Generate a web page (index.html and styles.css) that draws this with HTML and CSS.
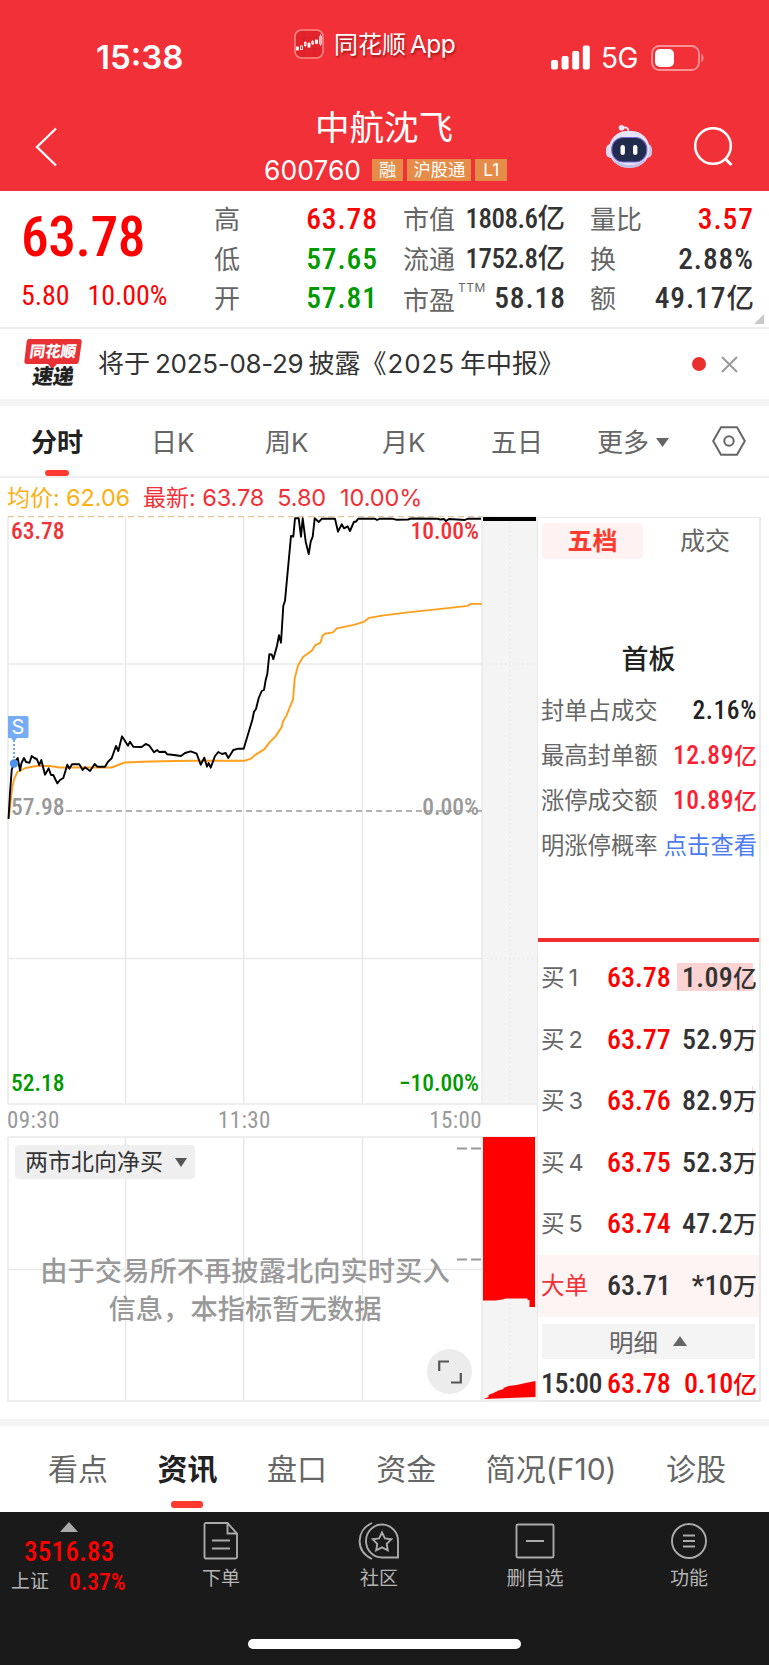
FILE: index.html
```
<!DOCTYPE html>
<html lang="zh-CN">
<head>
  <meta charset="UTF-8">
  <title>中航沈飞 600760</title>
  <link rel="stylesheet" href="styles.css">
</head>
<body>
  <header class="header">
    <div class="status-bar">
      <div class="time">15:38</div>
      <div class="brand">
        <svg width="30" height="30" viewBox="0 0 30 30">
          <rect x="1" y="1" width="28" height="28" rx="6.5" fill="#e3242b" stroke="#f98a8c" stroke-width="1.5"/>
          <path d="M2 9h26M2 20h26M10 2v26M20 2v26" stroke="#d61f27" stroke-width=".7"/>
          <g fill="#fff" stroke="#fff" stroke-width=".8">
            <rect x="2.5" y="18" width="2" height="3"/>
            <rect x="6.5" y="17" width="2" height="3.5" fill="none"/>
            <rect x="10.5" y="13.5" width="1.6" height="3" fill="none"/>
            <rect x="14" y="14.5" width="2" height="3.5"/>
            <rect x="17.8" y="12.5" width="1.6" height="2.5" fill="none"/>
            <rect x="21.5" y="11" width="2" height="3.5"/>
            <rect x="25.5" y="7" width="2" height="8.5" rx="1" fill="none"/>
            <path d="M11.3 12v6M15 13v6M18.6 11v5M26.5 5v12" fill="none" stroke-width=".6"/>
          </g>
        </svg>
        <span>同花顺<i>App</i></span>
      </div>
      <div class="signals">
        <svg width="39" height="25" viewBox="0 0 39 25" fill="#fff">
          <rect x="0" y="15" width="7" height="9.5" rx="2"/>
          <rect x="10.6" y="11" width="7" height="13.5" rx="2"/>
          <rect x="21.2" y="6" width="7" height="18.5" rx="2"/>
          <rect x="31.8" y="0.5" width="7" height="24" rx="2"/>
        </svg>
        <span class="net">5G</span>
        <svg width="54" height="26" viewBox="0 0 54 26">
          <rect x="1" y="1" width="47" height="24" rx="7.5" fill="none" stroke="#f99496" stroke-width="1.8"/>
          <path d="M50.500 9c2.600.8 2.600 7.200 0 8z" fill="#f99496"/>
          <rect x="4" y="4" width="19" height="18" rx="5" fill="#fff"/>
        </svg>
      </div>
    </div>
    <div class="nav">
      <svg class="back" width="24" height="40" viewBox="0 0 24 40"><path d="M21 1.500L2 20l19 18.500" fill="none" stroke="#fff" stroke-width="2.3"/></svg>
      <div class="stock">
        <h1>中航沈飞</h1>
        <div class="code">600760<b>融</b><b>沪股通</b><b>L1</b></div>
      </div>
      <svg class="robot" width="48" height="44" viewBox="0 0 48 44">
        <path d="M17 4q7-2 6.500 4" fill="none" stroke="#e6e3f7" stroke-width="1.8"/>
        <circle cx="16.5" cy="3.7" r="2.8" fill="#eceafc"/>
        <rect x="1" y="20" width="10" height="14" rx="5" fill="#dcdaf3"/>
        <rect x="37" y="20" width="10" height="14" rx="5" fill="#c8c4ea"/>
        <rect x="4" y="7" width="40.5" height="36.5" rx="18" fill="#e5e3f8"/>
        <path d="M7 33c6 10 28 11 34 0-3 15-31 14-34 0z" fill="#c2bee6"/>
        <rect x="6.8" y="13.5" width="35" height="24.5" rx="11.5" fill="#212b4b" stroke="#7466dd" stroke-width="1.2"/>
        <rect x="15.5" y="21" width="4.4" height="10" rx="2.2" fill="#fff"/>
        <rect x="28" y="21" width="4.4" height="10" rx="2.2" fill="#fff"/>
      </svg>
      <svg class="search" width="40" height="40" viewBox="0 0 40 40"><circle cx="19" cy="19" r="17.8" fill="none" stroke="#fff" stroke-width="2.5"/><path d="M31 31.500l6.500 6.500" stroke="#fff" stroke-width="3"/></svg>
    </div>
  </header>

  <section class="quote">
    <div class="last">
      <div class="price">63.78</div>
      <div class="change"><span>5.80</span><span>10.00%</span></div>
    </div>
    <dl class="col col-a">
      <dt>高</dt><dd class="red">63.78</dd>
      <dt>低</dt><dd class="green">57.65</dd>
      <dt>开</dt><dd class="green">57.81</dd>
    </dl>
    <dl class="col col-b">
      <dt>市值</dt><dd class="small">1808.6<em>亿</em></dd>
      <dt>流通</dt><dd class="small">1752.8<em>亿</em></dd>
      <dt class="pe">市盈<sup>TTM</sup></dt><dd>58.18</dd>
    </dl>
    <dl class="col col-c">
      <dt>量比</dt><dd class="red">3.57</dd>
      <dt>换</dt><dd>2.88%</dd>
      <dt>额</dt><dd>49.17<em>亿</em></dd>
    </dl>
    <svg class="corner" width="10" height="10"><path d="M10 0v10H0z" fill="#c8c8c8"/></svg>
  </section>

  <section class="news">
    <div class="news-logo">
      <svg width="58" height="34" viewBox="0 0 58 34"><path d="M5 0h50q3 0 2.700 3L55 22q-.5 3-3 3H33l-5 5-4-5H3q-3 0-2.600-3L2.600 3q.4-3 2.400-3z" fill="#e83035"/></svg>
      <b>同花顺</b>
      <strong>速递</strong>
    </div>
    <p>将于<i>2025-08-29</i>披露<span>《</span><i class="year">2025</i>年中报<span>》</span></p>
    <span class="dot"></span>
    <svg class="close" width="17" height="17" viewBox="0 0 17 17"><path d="M1 1l15 15M16 1L1 16" stroke="#999" stroke-width="2"/></svg>
  </section>

  <nav class="periods">
    <span class="on">分时</span><span>日K</span><span>周K</span><span>月K</span><span>五日</span><span>更多<svg width="13" height="9"><path d="M0 0h13L6.500 9z" fill="#666"/></svg></span>
    <svg width="34" height="30" viewBox="0 0 34 30"><path d="M9 1.200h16L32.800 15 25 28.800H9L1.200 15z" fill="none" stroke="#666" stroke-width="2"/><circle cx="17" cy="15" r="4.7" fill="none" stroke="#666" stroke-width="2"/></svg>
  </nav>

  <main class="board">
    <div class="summary"><span class="avg">均价: <i>62.06</i></span><span>最新: <i>63.78</i></span><span class="n3"><i>5.80</i></span><span><i>10.00%</i></span></div>
    <div class="board-row">
      <div class="charts">
        <!-- intraday price -->
        <svg class="intraday" width="530" height="589" viewBox="7 516 530 589">
          <rect x="482" y="517" width="55" height="587" fill="#f4f4f4"/>
          <g fill="none" stroke="#e9e9e9" stroke-width="1.5">
            <path d="M8 517v587M125.500 517v587M243.700 517v587M362.500 517v587M482 517v587"/>
            <path d="M8 664h474M8 958.500h474M8 1104h529M482 517h55"/>
            <path d="M510 517v587M482 664h55M482 958.500h55" stroke-dasharray="1.500 3"/>
          </g>
          <path d="M8 516.700h474" stroke="#e5c69a" stroke-width="1.3" stroke-dasharray="6 4"/>
          <path d="M66 811h416" stroke="#999" stroke-width="1.5" stroke-dasharray="6 4"/>
          <path d="M9 817l1.500-14 2-17 2-8 3-6 8-4 11-2h13l10 1.500h52l8-3 5-2 25-1 40-.7h55l7-2.400 3-3 10-6.300 5-6.700 6-6 6-9 1.500-6 3.500-6 6.500-16 1.700-21 3.300-13 5-8.500 9-6.500 3-5 5.500-2.700 2-7 2.300-2 8-1.300 4-4 17-3.500 10-3 5-4 15-2.500 24-3 33-3.500 27-3 3-2h11" fill="none" stroke="#ff9f1c" stroke-width="1.9" stroke-linejoin="round"/>
          <polyline fill="none" stroke="#000" stroke-width="1.9" stroke-linejoin="round" points="8.500,819 10,793 11.700,770 14,763 17.700,758 20,770.500 21.500,763 24,758 26,762 29.500,762.700 31.700,756 34.300,758 36.700,759 39.300,765 41.300,760 45,774.700 48.700,768.300 51,775 53.300,775 57.300,783.300 60,780 63.300,778 67.300,764.700 69.300,768.700 72,764.300 79.300,764.300 82.700,770 85,767.300 90,771 94.700,764 97.300,766.700 105,766.700 108,761.700 111.700,758.300 116,746 118.300,751 122,736.300 128,745.700 130,741.700 133.300,746.700 141.700,747 145.700,744 149,745.300 154,752.300 157.300,750 159,752 165,751.700 167.300,754.300 174,755 181,756 185,753 190.700,751.300 196.700,753.700 200.700,764.700 204.300,757.700 207,766.700 208.700,763 210.700,767.700 215,756 218.300,752 222,754 225.700,753 228.300,758 233.300,750 238.300,748.700 243.700,748.700 249.300,730 252.300,720 254,711.700 256,709 258.700,698 261.700,691 264,690 265.700,680 267.300,674 269.300,654.300 271.700,654.500 273.300,659.300 277,645.700 279,635.300 281,642.700 283.300,606 285,600.700 291,536 293.300,536.700 295,518.300 298.700,518.300 301,536.700 302.700,518.300 305.700,541.700 308.700,554 310.700,541.700 312.700,536.700 314.700,518.300 318.700,522 322,518.700 335,518.700 338,531.700 341.700,524.300 344,528.300 347.700,526.300 350,531 354,521.700 356,521.700 358.300,518.700 375,518.700 377,520 380,518.700 392,518.700 396,519.700 408,519.500 411,518.500 437,518.700 440,519.500 444,519 446,521 449,519 465,520 468,518.700 481,518.700"/>
          <path d="M483 519h53" stroke="#000" stroke-width="4"/>
          <path d="M14 740v22" stroke="#5b9df0" stroke-width="1.8" stroke-dasharray="2 2"/>
          <path d="M8 716h19q1.500 0 1.500 1.500v19q0 1.500-1.500 1.500H17l-3 3.500-3-3.500H8z" fill="#76acf5"/>
          <circle cx="14" cy="763.5" r="4.2" fill="#4e91e8"/>
          <text class="flag" x="18" y="734" text-anchor="middle">S</text>
          <g class="scale">
            <text x="11" y="539" fill="#f23037">63.78</text>
            <text x="479" y="539" fill="#f23037" text-anchor="end">10.00%</text>
            <text x="11" y="815" fill="#999">57.98</text>
            <text x="479" y="815" fill="#999" text-anchor="end">0.00%</text>
            <text x="11" y="1091" fill="#090">52.18</text>
            <text x="479" y="1091" fill="#090" text-anchor="end">−10.00%</text>
          </g>
        </svg>
        <div class="times"><span>09:30</span><span>11:30</span><span>15:00</span></div>
        <div class="flow">
          <svg width="530" height="266" viewBox="7 1136 530 266">
            <rect x="482" y="1137" width="55" height="264" fill="#f4f4f4"/>
            <path d="M8 1137v264h529M125.500 1137v264M243.700 1137v264M362.500 1137v264M482 1137v264M8 1137h529M8 1269.500h474" fill="none" stroke="#e9e9e9" stroke-width="1.5"/>
            <path d="M510 1137v264" stroke="#e9e9e9" stroke-width="1.5" stroke-dasharray="1.500 3"/>
            <path d="M483 1137h52v170h-5.500v-7h-2v-1.500h-22l-3 1-7 1h-12.500z" fill="#f00"/>
            <path d="M483.500 1399l5-2v-2l5-2 5-2.500 5-1.500v-1l5-2 8-1 9-2 10-2v16z" fill="#f00"/>
            <path d="M457 1148.500h10M471 1148.500h10M457 1259.500h10M471 1259.500h10" stroke="#999" stroke-width="1.8"/>
          </svg>
          <div class="picker"><span>两市北向净买</span><svg width="12" height="9"><path d="M0 0h12L6 9z" fill="#555"/></svg></div>
          <p class="notice">由于交易所不再披露北向实时买入<br>信息，本指标暂无数据</p>
          <div class="expand"><svg width="24" height="24" viewBox="0 0 24 24"><path d="M1.200 11V1.500H11M22.800 13v9.500H13" fill="none" stroke="#555" stroke-width="2.2"/></svg></div>
        </div>
      </div>

      <aside class="depth">
        <div class="depth-tabs"><span class="on">五档</span><span>成交</span></div>
        <h2>首板</h2>
        <ul class="facts">
          <li><span>封单占成交</span><b>2.16%</b></li>
          <li><span>最高封单额</span><b class="hot">12.89<em>亿</em></b></li>
          <li><span>涨停成交额</span><b class="hot">10.89<em>亿</em></b></li>
          <li><span>明涨停概率</span><a>点击查看</a></li>
        </ul>
        <ul class="orders">
          <li><span>买<i>1</i></span><b>63.78</b><u class="bar full">1.09<em>亿</em></u></li>
          <li><span>买<i>2</i></span><b>63.77</b><u class="bar">52.9<em>万</em></u></li>
          <li><span>买<i>3</i></span><b>63.76</b><u class="bar">82.9<em>万</em></u></li>
          <li><span>买<i>4</i></span><b>63.75</b><u class="bar">52.3<em>万</em></u></li>
          <li><span>买<i>5</i></span><b>63.74</b><u>47.2<em>万</em></u></li>
          <li class="big"><span>大单</span><b>63.71</b><u>*10<em>万</em></u></li>
        </ul>
        <div class="detail">明细<svg width="14" height="10"><path d="M7 0l7 10H0z" fill="#666"/></svg></div>
        <div class="tick"><span>15:00</span><b>63.78</b><u>0.10<em>亿</em></u></div>
      </aside>
    </div>
  </main>

  <nav class="sections">
    <span>看点</span><span class="on">资讯</span><span>盘口</span><span>资金</span><span>简况(F10)</span><span>诊股</span>
  </nav>

  <footer class="toolbar">
    <div class="index">
      <svg width="18" height="10"><path d="M9 0l9 10H0z" fill="#aaa"/></svg>
      <b>3516.83</b>
      <div><span>上证</span><em>0.37%</em></div>
    </div>
    <div class="tool t1">
      <svg width="36" height="38" viewBox="0 0 36 38"><path d="M3 1h21.500L34 11.500V35q0 1.500-1.500 1.500h-29Q1.500 36.500 1.500 35V2.500Q1.500 1 3 1zM24.500 1v10.500H34M9 18.500h18M9 26.500h18"/></svg>
      下单
    </div>
    <div class="tool t2">
      <svg width="42" height="38" viewBox="0 0 42 38"><path d="M14 1C-2 8-3 29 14 37M40 35.500V19.500A16 16.500 0 1 0 24 35.500zM24 10.500l2.900 5.900 6.400.9-4.600 4.600 1.100 6.400-5.800-3-5.800 3 1.100-6.400-4.600-4.600 6.400-.9z"/></svg>
      社区
    </div>
    <div class="tool t3">
      <svg width="40" height="38" viewBox="0 0 40 38"><path d="M3 2.500h34q1.500 0 1.500 1.500v30q0 1.500-1.500 1.500H3Q1.500 35.500 1.500 34V4Q1.500 2.500 3 2.500zM11 19h18"/></svg>
      删自选
    </div>
    <div class="tool t4">
      <svg width="38" height="38" viewBox="0 0 38 38"><circle cx="19" cy="19" r="17"/><path d="M13 13.500h12M13 19h12M13 24.500h12"/></svg>
      功能
    </div>
    <div class="home"></div>
  </footer>
</body>
</html>
```
FILE: styles.css
```
* { box-sizing: border-box; margin: 0; padding: 0; }
body { width: 769px; height: 1665px; background: #fff; font-family: Inter, "Noto Sans CJK SC", sans-serif; color: #333; overflow: hidden; }
i, em, u { font-style: normal; text-decoration: none; }
ul { list-style: none; }
svg { display: block; flex: none; }
.red { color: #f00 !important; }
.green { color: #090 !important; }

/* header */
.header { height: 191px; background: #f23037; color: #fff; }
.status-bar { height: 90px; display: flex; }
.time { width: 294px; padding: 36px 0 0 96px; font-size: 33px; line-height: 43px; font-weight: 600; }
.brand { width: 257px; display: flex; padding-top: 29px; }
.brand span { margin-left: 10px; font-size: 24px; line-height: 31px; white-space: nowrap; text-shadow: 1px 2px 2px rgba(80,0,0,.5); }
.brand i { margin-left: 4px; font-size: 24.5px; letter-spacing: -.6px; }
.signals { display: flex; padding-top: 45px; }
.net { width: 37px; margin: 0 13px 0 11px; font-size: 28px; line-height: 27px; letter-spacing: -.5px; }
.nav { display: flex; height: 101px; }
.back { margin: 37px 0 0 35px; }
.stock { width: 250px; margin-left: 205px; }
.stock h1 { padding-left: 51px; font-size: 34.5px; line-height: 40px; font-weight: 400; margin-top: 18px; white-space: nowrap; }
.code { display: flex; align-items: center; height: 29px; margin-top: 7px; font-size: 26.5px; }
.code b { margin-left: 4px; padding: 0 6px; height: 22px; line-height: 21px; font-size: 17.3px; font-weight: 400; background: #e58c49; white-space: nowrap; }
.code b:first-of-type { margin-left: 11px; padding: 0 7px; }
.code b:last-of-type { padding: 0 8px; }
.robot { margin: 34px 0 0 91px; }
.search { margin: 37px 0 0 41px; }

/* quote */
.quote { position: relative; height: 138px; display: flex; padding-top: 9px; border-bottom: 2px solid #ececec; }
.last { width: 214px; padding-left: 21px; font-family: "Roboto Condensed"; color: #f00; }
.price { margin-top: 8px; font-size: 55.5px; line-height: 60px; font-weight: 500; letter-spacing: -.5px; }
.change { margin-top: 12px; display: flex; gap: 18px; font-size: 28px; line-height: 32px; letter-spacing: -.1px; font-weight: 450; }
.col { display: grid; grid-template-columns: 52px 1fr; grid-auto-rows: 39.5px; line-height: 38px; white-space: nowrap; }
.col dt { padding-top: 1px; font-size: 26px; color: #666; }
.col dd { text-align: right; font-family: "Roboto Condensed", "Noto Sans CJK SC"; font-size: 29.5px; font-weight: 500; letter-spacing: .9px; margin-right: -.9px; }
.col .small { font-size: 27px; letter-spacing: -.5px; margin-right: 0; }
.col em { font-size: 27.5px; letter-spacing: 0; }
.col-a { width: 163px; }
.col-b { width: 162px; margin-left: 26px; }
.col-c { width: 163px; margin-left: 25px; }
.col .pe { padding-top: 3px; }
.pe sup { font-size: 12px; vertical-align: 18px; line-height: 0; margin-left: 3px; letter-spacing: .5px; }
.corner { position: absolute; right: 5px; bottom: 3px; }

/* news */
.news { height: 77px; display: flex; align-items: center; border-bottom: 7px solid #f4f4f4; }
.news-logo { position: relative; width: 58px; height: 48px; margin: -2px 0 0 24px; }
.news-logo svg { position: absolute; left: 0; top: 0; }
.news-logo b, .news-logo strong { position: relative; display: block; width: 58px; text-align: center; transform: skewX(-8deg); font-weight: 900; }
.news-logo b { font-size: 15.5px; line-height: 25px; color: #fff; }
.news-logo strong { font-size: 21px; line-height: 25px; color: #222; letter-spacing: -.5px; }
.news p { flex: none; width: 610px; padding-left: 16px; font-size: 26px; line-height: 40px; white-space: nowrap; }
.news i { margin: 0 5px; font-size: 26px; letter-spacing: -.3px; }
.news .year { margin-left: 1px; letter-spacing: .9px; }
.dot { width: 14px; height: 14px; border-radius: 7px; background: #e9302f; }
.close { margin-left: 15px; }

/* period tabs */
.periods { position: relative; display: flex; height: 72px; align-items: center; color: #666; font-size: 26px; border-bottom: 2px solid #eee; line-height: 40px; white-space: nowrap; }
.periods span { position: relative; top: 1.5px; }
.periods span:nth-child(1) { margin-left: 31px; width: 52px; }
.periods span:nth-child(2) { margin-left: 68px; width: 43px; }
.periods span:nth-child(3) { margin-left: 71px; width: 45px; }
.periods span:nth-child(4) { margin-left: 72px; width: 44px; }
.periods span:nth-child(5) { margin-left: 65px; width: 52px; }
.periods span:nth-child(6) { margin-left: 54px; width: 72px; display: flex; align-items: center; gap: 7px; }
.periods > svg { margin-left: 43px; }
.on { font-weight: 700; color: #222; }
.periods .on::after, .sections .on::after { content: ""; position: absolute; left: 50%; width: 24px; height: 6px; margin-left: -12px; border-radius: 3px; background: #ff3b30; }
.periods .on::after { bottom: -13.5px; }

/* board */
.board { height: 948px; padding: 0 8px 0 7px; border-bottom: 7px solid #f4f4f4; }
.summary { display: flex; height: 38px; font-size: 23px; line-height: 40px; color: #f23037; white-space: pre; }
.summary span { margin-right: 13px; }
.summary i { font-size: 23.5px; letter-spacing: -.1px; }
.summary .avg { color: #fbb016; }
.summary .n3 { margin-right: 14px; }
.board-row { display: flex; }
.charts { width: 530px; }
.scale, .times { font-family: "Roboto Condensed"; font-size: 23.5px; font-weight: 500; }
.flag { font-size: 20px; fill: #fff; }
.times { display: flex; justify-content: space-between; width: 475px; height: 31px; line-height: 31px; font-size: 23px; letter-spacing: .4px; color: #999; font-weight: 450; }
.flow { position: relative; }
.picker { position: absolute; left: 8px; top: 9px; display: flex; align-items: center; gap: 12px; width: 180px; height: 34px; padding-left: 10px; border-radius: 4px; background: rgba(236,236,236,.85); font-size: 23px; white-space: nowrap; }
.picker span { margin-top: -4px; }
.notice { position: absolute; left: 0; top: 117px; width: 476px; text-align: center; font-size: 27.3px; line-height: 38px; color: #999; font-weight: 500; white-space: nowrap; }
.expand { position: absolute; left: 420px; top: 213px; width: 45px; height: 45px; border-radius: 50%; background: #ececec; display: flex; align-items: center; justify-content: center; }

/* order book */
.depth { width: 224px; height: 885px; margin-top: 1px; border: 1px solid #e9e9e9; border-width: 1px 2px 2px 1px; white-space: nowrap; }
.depth-tabs { display: flex; padding: 5px 0 0 4px; font-size: 25px; line-height: 36px; color: #666; }
.depth-tabs span { flex: none; width: 101px; text-align: center; }
.depth-tabs span + span { width: 124px; margin-right: -8px; }
.depth-tabs .on { background: #fff2f2; border-radius: 4px; color: #ff3b30; }
.depth h2 { margin-top: 81px; text-align: center; font-size: 27px; line-height: 40px; font-weight: 500; color: #222; }
.facts { height: 262px; padding-top: 8px; border-bottom: 4px solid #f02d2d; }
.facts li { display: flex; justify-content: space-between; height: 45px; padding: 0 2px 0 3px; line-height: 45px; font-size: 23.3px; color: #666; }
.facts b { font-family: "Roboto Condensed", "Noto Sans CJK SC"; font-weight: 500; font-size: 25.5px; letter-spacing: .6px; color: #222; }
.facts em { font-size: 23px; letter-spacing: 0; }
.facts .hot { color: #ff1f33; }
.facts a { color: #4d7bf3; }
.orders { padding-top: 5px; }
.orders li, .tick { display: grid; grid-template-columns: 66px 1fr auto; height: 61.6px; line-height: 61px; padding: 0 2px 0 3px; font-size: 23.5px; color: #666; }
.orders i { margin-left: 4px; }
.orders b, .orders u, .tick { font-family: "Roboto Condensed", "Noto Sans CJK SC"; font-size: 28px; font-weight: 500; }
.orders b, .tick b { color: #f00; font-weight: 500; }
.orders u { position: relative; z-index: 0; color: #333; letter-spacing: .3px; }
.orders em, .tick em { font-size: 24px; letter-spacing: 0; }
.orders .bar::before { content: ""; position: absolute; z-index: -1; right: 4px; top: 16px; width: 1px; height: 28px; background: #fbd3d3; }
.orders .full::before { width: 76px; }
.orders .big { background: #fff4f4; color: #f23037; }
.orders .big b { color: #333; }
.detail { display: flex; align-items: center; gap: 15px; width: 213px; height: 35px; margin: 7px 0 0 4px; padding-left: 67px; background: #f4f4f4; font-size: 24.5px; color: #666; }
.tick { height: 40px; line-height: 50px; color: #333; }
.tick span { letter-spacing: -.4px; }
.tick u { color: #f00; letter-spacing: -.2px; }

/* section tabs */
.sections { display: flex; height: 86px; padding: 0 43px 0 48px; justify-content: space-between; font-size: 30px; line-height: 87px; color: #666; white-space: nowrap; }
.sections span { position: relative; }
.sections .on::after { bottom: 4px; width: 32px; margin-left: -16px; height: 7px; }

/* toolbar */
.toolbar { position: relative; height: 153px; background: #1a1a1a; display: flex; color: #b5b5b5; font-size: 19px; }
.index { width: 139px; padding: 10px 0 0 11px; font-family: "Roboto Condensed", "Noto Sans CJK SC"; }
.index svg { margin-left: 49px; }
.index b { display: block; margin: 5px 0 0 13px; font-size: 27px; line-height: 30px; font-weight: 500; color: #f00; letter-spacing: .3px; }
.index div { display: flex; gap: 20px; line-height: 30px; }
.index em { color: #f00; font-size: 23.5px; font-weight: 500; }
.tool { position: absolute; top: 10px; width: 80px; line-height: 38px; text-align: center; }
.tool svg { margin: 0 auto; fill: none; stroke: #aaa; stroke-width: 1.9; }
.t1 { left: 181px; }
.t2 { left: 339px; }
.t3 { left: 495px; }
.t4 { left: 649px; }
.home { position: absolute; left: 248px; top: 127px; width: 273px; height: 10px; border-radius: 5px; background: #fff; }
```
